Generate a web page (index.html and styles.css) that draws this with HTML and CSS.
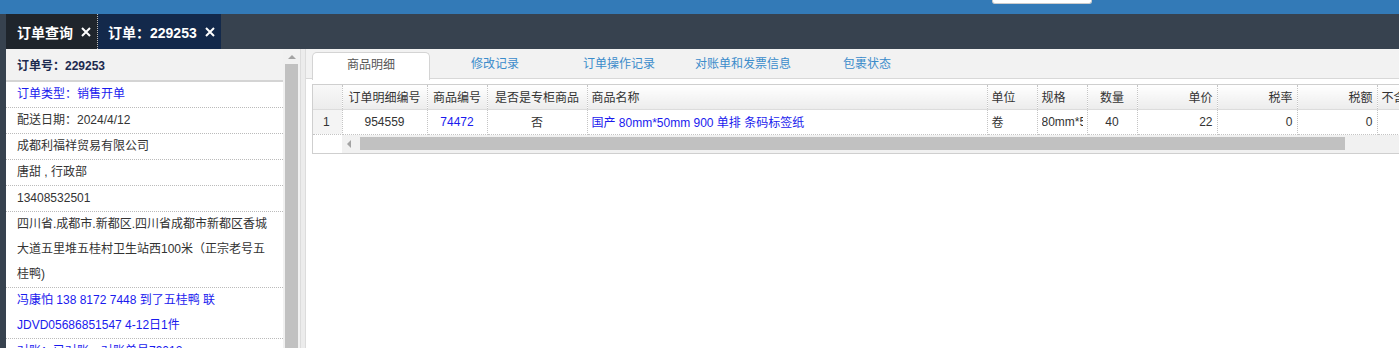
FILE: index.html
```html
<!DOCTYPE html>
<html lang="zh-CN">
<head>
    <meta charset="UTF-8">
    <title>订单：229253</title>
    <link rel="stylesheet" href="styles.css">
</head>
<body>
    <div class="topbar">
        <div class="search-box"></div>
    </div>

    <div class="tabbar">
        <div class="page-tab home">订单查询
            <svg class="close" width="10" height="10" viewBox="0 0 10 10"><path d="M1 1L9 9M9 1L1 9" stroke="#fff" stroke-width="2"/></svg>
        </div>
        <div class="page-tab current">订单：229253
            <svg class="close" width="10" height="10" viewBox="0 0 10 10"><path d="M1 1L9 9M9 1L1 9" stroke="#fff" stroke-width="2"/></svg>
        </div>
    </div>

    <div class="main">
        <aside class="side">
            <div class="side-list">
                <div class="side-head">订单号：229253</div>
                <div class="side-row blue">订单类型：销售开单</div>
                <div class="side-row">配送日期：2024/4/12</div>
                <div class="side-row">成都利福祥贸易有限公司</div>
                <div class="side-row">唐甜 , 行政部</div>
                <div class="side-row">13408532501</div>
                <div class="side-row">四川省.成都市.新都区.四川省成都市新都区香城大道五里堆五桂村卫生站西100米（正宗老号五桂鸭)</div>
                <div class="side-row blue">冯康怕 138 8172 7448 到了五桂鸭 联JDVD05686851547 4-12日1件</div>
                <div class="side-row blue">对账：已对账，对账单号79012</div>
            </div>
            <div class="vscroll">
                <div class="arrow-up"></div>
                <div class="vthumb"></div>
            </div>
        </aside>

        <div class="splitter"></div>

        <section class="content">
            <div class="detail-tabs">
                <div class="dtab active">商品明细</div>
                <div class="dtab">修改记录</div>
                <div class="dtab">订单操作记录</div>
                <div class="dtab">对账单和发票信息</div>
                <div class="dtab">包裹状态</div>
            </div>

            <div class="grid">
                <table>
                    <colgroup>
                        <col style="width:29px">
                        <col style="width:85px">
                        <col style="width:60px">
                        <col style="width:100px">
                        <col style="width:400px">
                        <col style="width:50px">
                        <col style="width:50px">
                        <col style="width:50px">
                        <col style="width:80px">
                        <col style="width:80px">
                        <col style="width:80px">
                        <col style="width:80px">
                    </colgroup>
                    <thead>
                        <tr>
                            <th class="rn"></th>
                            <th class="c">订单明细编号</th>
                            <th class="c">商品编号</th>
                            <th class="c">是否是专柜商品</th>
                            <th>商品名称</th>
                            <th>单位</th>
                            <th>规格</th>
                            <th class="c">数量</th>
                            <th class="r">单价</th>
                            <th class="r">税率</th>
                            <th class="r">税额</th>
                            <th>不含税金额</th>
                        </tr>
                    </thead>
                    <tbody>
                        <tr>
                            <td class="rn">1</td>
                            <td class="c">954559</td>
                            <td class="c blue">74472</td>
                            <td class="c">否</td>
                            <td class="blue">国产 80mm*50mm 900 单排 条码标签纸</td>
                            <td>卷</td>
                            <td><div class="clip">80mm*50mm</div></td>
                            <td class="c">40</td>
                            <td class="r">22</td>
                            <td class="r">0</td>
                            <td class="r">0</td>
                            <td class="r">22</td>
                        </tr>
                    </tbody>
                </table>
                <div class="hscroll">
                    <div class="arrow-left"></div>
                    <div class="hthumb"></div>
                </div>
            </div>
        </section>
    </div>
</body>
</html>
```

FILE: styles.css
```css
* {
    box-sizing: border-box;
}

html, body {
    height: 100%;
}

body {
    margin: 0;
    overflow: hidden;
    font-family: Arial, "Liberation Sans", "Noto Sans CJK SC", sans-serif;
    font-size: 12px;
    color: #333;
    background: #37424f;
}

.topbar {
    height: 14px;
    background: #337ab7;
    position: relative;
}

.search-box {
    position: absolute;
    left: 992px;
    top: 0;
    width: 100px;
    height: 4px;
    background: #fff;
    border-radius: 0 0 3px 3px;
    border: 1px solid #ccc;
    border-top: none;
}

.tabbar {
    height: 35px;
    background: #37424f;
    padding-left: 6px;
    display: flex;
}

.page-tab {
    height: 35px;
    padding: 0 6px 0 11px;
    color: #fff;
    font-size: 14px;
    font-weight: bold;
    display: flex;
    align-items: center;
}

.page-tab.home {
    width: 92px;
    background: #1f252c;
    border-right: 1px dotted #bbb;
}

.page-tab.current {
    width: 123px;
    background: #13294b;
    padding-left: 10px;
}

.close {
    margin-left: 8px;
    margin-top: 1px;
}

.main {
    display: flex;
    height: 299px;
    padding-left: 6px;
}

.side {
    width: 294px;
    display: flex;
    background: #fff;
}

.side-list {
    width: 277px;
}

.side-head {
    height: 33px;
    line-height: 34px;
    padding-left: 11px;
    background: #f2f2f2;
    color: #1d2a4f;
    font-weight: bold;
    border-bottom: 2px solid #d4d4d4;
}

.side-row {
    line-height: 25px;
    padding: 0 8px 0 11px;
    color: #333;
    border-bottom: 1px dotted #bbb;
}

.side-row.blue {
    color: #1a1aee;
}

.vscroll {
    width: 17px;
    background: #f1f1f1;
    padding: 0 2px;
}

.arrow-up {
    width: 0;
    height: 0;
    margin: 6px auto 5px;
    border-left: 4px solid transparent;
    border-right: 4px solid transparent;
    border-bottom: 4px solid #a3a3a3;
}

.vthumb {
    height: 290px;
    background: #c1c1c1;
}

.splitter {
    width: 6px;
    background: #ececec;
    border-left: 1px solid #dcdcdc;
    border-right: 1px solid #dcdcdc;
}

.content {
    flex: 1;
    min-width: 0;
    background: #fff;
    overflow: hidden;
}

.detail-tabs {
    height: 30px;
    background: #f2f2f2;
    border-bottom: 1px solid #d8d8d8;
    display: flex;
    gap: 6px;
    padding: 3px 0 0 6px;
}

.dtab {
    width: 118px;
    height: 27px;
    line-height: 25px;
    text-align: center;
    color: #3b8ccb;
}

.dtab.active {
    background: #fff;
    color: #555;
    border: 1px solid #d4d4d4;
    border-bottom: none;
    border-radius: 5px 5px 0 0;
    height: 28px;
}

.grid {
    margin: 5px 0 0 6px;
    border: 1px solid #cfcfcf;
    border-right: none;
    width: 1200px;
}

table {
    border-collapse: collapse;
    table-layout: fixed;
    width: 1144px;
}

th, td {
    height: 24px;
    padding: 0 4px;
    white-space: nowrap;
    overflow: hidden;
    text-align: left;
    border-right: 1px dotted #c4c4c4;
    font-weight: normal;
}

th {
    background: linear-gradient(#ffffff, #ececec);
    border-bottom: 1px solid #dcdcdc;
    height: 24px;
    font-size: 12px;
}

td {
    border-bottom: 1px dotted #c4c4c4;
    height: 25px;
}

.clip {
    width: 41px;
    overflow: hidden;
}

.rn {
    background: #f4f4f4;
    padding-left: 10px;
}

th.rn {
    background: linear-gradient(#f8f8f8, #ececec);
}

.c {
    text-align: center;
}

.r {
    text-align: right;
}

td.blue {
    color: #1a1aee;
}

.hscroll {
    height: 18px;
    display: flex;
    align-items: center;
    margin-left: 29px;
    background: #f1f1f1;
}

.arrow-left {
    width: 0;
    height: 0;
    margin: 0 9px 0 5px;
    border-top: 4px solid transparent;
    border-bottom: 4px solid transparent;
    border-right: 4px solid #a3a3a3;
}

.hthumb {
    width: 985px;
    height: 13px;
    background: #c1c1c1;
}
```
